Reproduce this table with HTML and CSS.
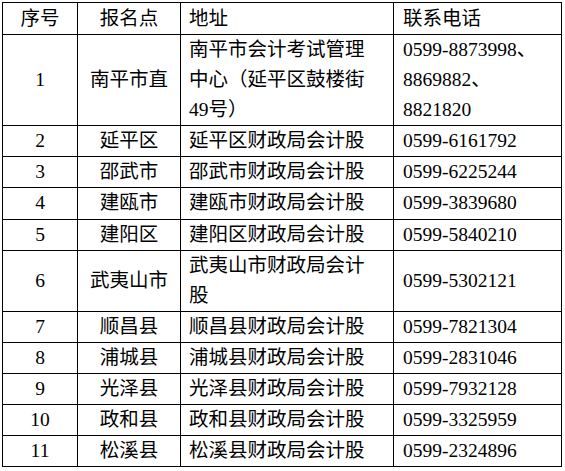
FILE: index.html
```html
<!DOCTYPE html>
<html lang="zh-CN">
<head>
<meta charset="utf-8">
<link rel="stylesheet" href="styles.css">
</head>
<body>
<table class="sites">
  <colgroup>
    <col class="c-no"><col class="c-site"><col class="c-addr"><col class="c-tel">
  </colgroup>
  <thead>
    <tr><th class="ctr">序号</th><th class="ctr">报名点</th><th>地址</th><th>联系电话</th></tr>
  </thead>
  <tbody>
    <tr><td class="ctr">1</td><td class="ctr">南平市直</td><td>南平市会计考试管理中心（延平区鼓楼街49号）</td><td>0599-8873998、8869882、8821820</td></tr>
    <tr><td class="ctr">2</td><td class="ctr">延平区</td><td>延平区财政局会计股</td><td>0599-6161792</td></tr>
    <tr><td class="ctr">3</td><td class="ctr">邵武市</td><td>邵武市财政局会计股</td><td>0599-6225244</td></tr>
    <tr><td class="ctr">4</td><td class="ctr">建瓯市</td><td>建瓯市财政局会计股</td><td>0599-3839680</td></tr>
    <tr><td class="ctr">5</td><td class="ctr">建阳区</td><td>建阳区财政局会计股</td><td>0599-5840210</td></tr>
    <tr><td class="ctr">6</td><td class="ctr">武夷山市</td><td>武夷山市财政局会计股</td><td>0599-5302121</td></tr>
    <tr><td class="ctr">7</td><td class="ctr">顺昌县</td><td>顺昌县财政局会计股</td><td>0599-7821304</td></tr>
    <tr><td class="ctr">8</td><td class="ctr">浦城县</td><td>浦城县财政局会计股</td><td>0599-2831046</td></tr>
    <tr><td class="ctr">9</td><td class="ctr">光泽县</td><td>光泽县财政局会计股</td><td>0599-7932128</td></tr>
    <tr><td class="ctr">10</td><td class="ctr">政和县</td><td>政和县财政局会计股</td><td>0599-3325959</td></tr>
    <tr><td class="ctr">11</td><td class="ctr">松溪县</td><td>松溪县财政局会计股</td><td>0599-2324896</td></tr>
  </tbody>
</table>
</body>
</html>
```
FILE: styles.css
```css
html, body {
  margin: 0;
  padding: 0;
  background: #fff;
}
body {
  padding: 2px;
  font-family: "Liberation Serif", "Noto Sans CJK SC", serif;
  font-size: 19.5px;
  color: #000;
}
.sites {
  border-collapse: collapse;
  table-layout: fixed;
  width: 559px;
}
.c-no { width: 75px; }
.c-site { width: 103px; }
.c-addr { width: 213px; }
.c-tel { width: 168px; }
.sites th,
.sites td {
  border: 1px solid #000;
  font-weight: normal;
  line-height: 30.1px;
  padding: 0 12px 0 8px;
  text-align: left;
  vertical-align: middle;
}
.sites th {
  line-height: 31px;
}
.sites th:nth-child(4),
.sites td:nth-child(4) {
  padding-left: 9px;
  padding-right: 6px;
}
.sites .ctr {
  text-align: center;
  padding-left: 0;
  padding-right: 0;
}
```
